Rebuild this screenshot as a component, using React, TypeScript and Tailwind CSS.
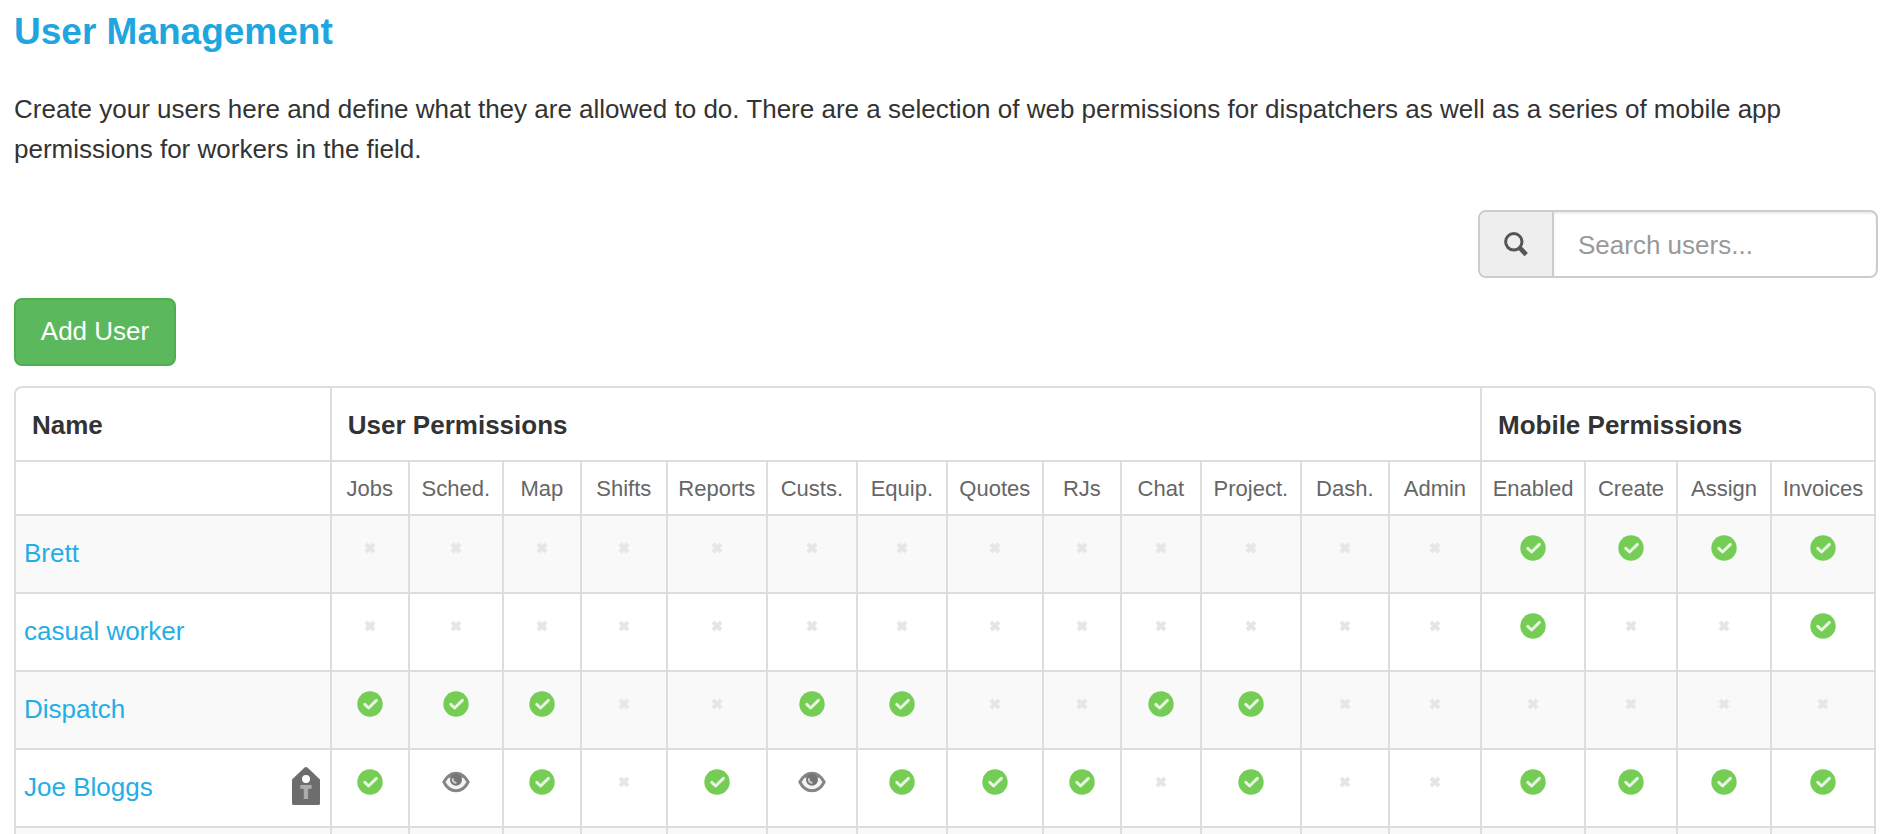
import { useState } from 'react';
import { clsx } from 'clsx';

type Permission = 'yes' | 'no' | 'view';

interface Column {
  label: string;
  width: string;
}

interface User {
  name: string;
  tagged?: boolean;
  permissions: string;
}

const userColumns: Column[] = [
  { label: 'Jobs', width: 'w-[78px]' },
  { label: 'Sched.', width: 'w-[94px]' },
  { label: 'Map', width: 'w-[78px]' },
  { label: 'Shifts', width: 'w-[86px]' },
  { label: 'Reports', width: 'w-[100px]' },
  { label: 'Custs.', width: 'w-[90px]' },
  { label: 'Equip.', width: 'w-[90px]' },
  { label: 'Quotes', width: 'w-[96px]' },
  { label: 'RJs', width: 'w-[78px]' },
  { label: 'Chat', width: 'w-[80px]' },
  { label: 'Project.', width: 'w-[100px]' },
  { label: 'Dash.', width: 'w-[88px]' },
  { label: 'Admin', width: 'w-[92px]' },
];

const mobileColumns: Column[] = [
  { label: 'Enabled', width: 'w-[104px]' },
  { label: 'Create', width: 'w-[92px]' },
  { label: 'Assign', width: 'w-[94px]' },
  { label: 'Invoices', width: 'w-[104px]' },
];

const columns = [...userColumns, ...mobileColumns];

// One character per column: y = allowed, v = view only, - = not allowed
const users: User[] = [
  { name: 'Brett', permissions: '-------------yyyy' },
  { name: 'casual worker', permissions: '-------------y--y' },
  { name: 'Dispatch', permissions: 'yyy--yy--yy------' },
  { name: 'Joe Bloggs', tagged: true, permissions: 'yvy-yvyyy-y--yyyy' },
];

function toPermission(code: string): Permission {
  if (code === 'y') return 'yes';
  if (code === 'v') return 'view';
  return 'no';
}

function SearchIcon() {
  return (
    <svg width="24" height="25" viewBox="0 0 24 25" fill="none" stroke="#555555" aria-hidden="true">
      <circle cx="9.8" cy="9.8" r="8.2" strokeWidth="3" />
      <path d="M16 16.2L22.2 22.6" strokeWidth="4.6" />
    </svg>
  );
}

function CheckIcon() {
  return (
    <svg width="26" height="26" viewBox="0 0 26 26" role="img" aria-label="Allowed">
      <circle cx="13" cy="13" r="12.7" fill="#76cd56" />
      <path d="M7.8 13.4L11.6 17L19.4 9.4" fill="none" stroke="#e6f6e0" strokeWidth="3" strokeLinecap="round" strokeLinejoin="round" />
    </svg>
  );
}

function CrossIcon() {
  return (
    <svg width="12" height="12" viewBox="0 0 12 12" role="img" aria-label="Not allowed">
      <path d="M2 2L10 10M10 2L2 10" stroke="#e6e6e6" strokeWidth="4.2" />
    </svg>
  );
}

function EyeIcon() {
  return (
    <svg width="28" height="22" viewBox="0 0 28 22" fill="none" role="img" aria-label="View only">
      <path d="M1.8 11C4.8 5.4 9 2.2 14 2.2S23.2 5.4 26.2 11C23.2 16.8 19 19.8 14 19.8S4.8 16.8 1.8 11Z" fill="#f4f4f4" stroke="#858585" strokeWidth="3" strokeLinejoin="round" />
      <path d="M7 6.4C8.8 4 11 3 14 3S19.2 4 21 6.4" stroke="#858585" strokeWidth="2.4" />
      <circle cx="14" cy="8.8" r="6" fill="#757575" />
      <path d="M10.8 8C10.8 10.6 12 11.6 13.6 11.8" stroke="#cccccc" strokeWidth="2" strokeLinecap="round" />
    </svg>
  );
}

function TagIcon() {
  return (
    <svg width="28" height="38" viewBox="0 0 28 38" role="img" aria-label="Tagged">
      <path
        fillRule="evenodd"
        fill="#6d6d6d"
        d="M12.6 0.6Q14 -0.6 15.4 0.6L28 12.6V36.4Q28 38 26.4 38H1.6Q0 38 0 36.4V12.6ZM14 8A4 4 0 1 0 14 16A4 4 0 1 0 14 8Z"
      />
      <text x="14" y="31" textAnchor="middle" fontSize="16" fontWeight="bold" fill="#adadad" stroke="#adadad" strokeWidth="1.8">
        T
      </text>
    </svg>
  );
}

function PermissionIcon({ value }: { value: Permission }) {
  if (value === 'yes') return <CheckIcon />;
  if (value === 'view') return <EyeIcon />;
  return <CrossIcon />;
}

function UserRow({ user, striped }: { user: User; striped: boolean }) {
  return (
    <tr className={clsx(striped && 'bg-[#f9f9f9]')}>
      <td className="h-[78px] border-b-2 border-[#ddd] pb-0.5 pl-2 pr-2.5">
        <div className="flex items-start justify-between">
          <a href="#" className="text-[#23aee6]">{user.name}</a>
          {user.tagged && <TagIcon />}
        </div>
      </td>
      {columns.map((column, i) => (
        <td key={column.label} className="border-b-2 border-l-2 border-[#ddd] pb-3">
          <div className="flex justify-center">
            <PermissionIcon value={toPermission(user.permissions[i])} />
          </div>
        </td>
      ))}
    </tr>
  );
}

export default function App() {
  const [query, setQuery] = useState('');
  const visible = users.filter((u) => u.name.toLowerCase().includes(query.toLowerCase()));

  return (
    <main className="h-screen overflow-hidden bg-white pl-3.5 pr-2.5 pt-3 font-['Liberation_Sans',Arial,sans-serif] text-[26px] leading-[40px] text-[#333]">
      <h1 className="text-[37px] font-bold text-[#20a6df]">User Management</h1>
      <p className="mt-[37px]">
        Create your users here and define what they are allowed to do. There are a selection of web permissions for
        dispatchers as well as a series of mobile app permissions for workers in the field.
      </p>

      {/* Search */}
      <div className="mt-[41px] flex justify-end">
        <div className="flex h-[68px] w-[400px] overflow-hidden rounded-lg border-2 border-[#ccc]">
          <label htmlFor="user-search" aria-label="Search users" className="flex w-[74px] shrink-0 items-center justify-center border-r-2 border-[#ccc] bg-[#eee]">
            <SearchIcon />
          </label>
          <input
            id="user-search"
            type="text"
            value={query}
            onChange={(e) => setQuery(e.target.value)}
            placeholder="Search users..."
            className="min-w-0 flex-1 px-6 pt-0.5 shadow-[inset_0_2px_2px_rgba(0,0,0,0.075)] outline-none placeholder:text-[#999]"
          />
        </div>
      </div>

      <button type="button" className="mt-5 block h-[68px] min-w-[162px] rounded-lg border-2 border-[#4cae4c] bg-[#5cb85c] px-6 pb-0.5 text-white">
        Add User
      </button>

      {/* Permissions table */}
      <div className="mr-0.5 mt-5 overflow-hidden rounded-t-lg border-2 border-b-0 border-[#ddd]">
        <table className="w-full table-fixed border-separate border-spacing-0">
          <colgroup>
            <col />
            {columns.map((column) => (
              <col key={column.label} className={column.width} />
            ))}
          </colgroup>
          <thead>
            <tr className="text-left">
              <th className="h-[74px] border-b-2 border-[#ddd] px-4 pt-0.5 font-bold">Name</th>
              <th colSpan={userColumns.length} className="border-b-2 border-l-2 border-[#ddd] px-4 pt-0.5 font-bold">
                User Permissions
              </th>
              <th colSpan={mobileColumns.length} className="border-b-2 border-l-2 border-[#ddd] px-4 pt-0.5 font-bold">
                Mobile Permissions
              </th>
            </tr>
            <tr className="text-[22px] text-[#666]">
              <td className="h-[54px] border-b-2 border-[#ddd]" />
              {columns.map((column) => (
                <th key={column.label} className="border-b-2 border-l-2 border-[#ddd] pt-0.5 font-normal">
                  {column.label}
                </th>
              ))}
            </tr>
          </thead>
          <tbody>
            {visible.map((user, i) => (
              <UserRow key={user.name} user={user} striped={i % 2 === 0} />
            ))}
            <tr className="bg-[#f9f9f9]">
              <td className="h-[78px]" />
              {columns.map((column) => (
                <td key={column.label} className="border-l-2 border-[#ddd]" />
              ))}
            </tr>
          </tbody>
        </table>
      </div>
    </main>
  );
}
